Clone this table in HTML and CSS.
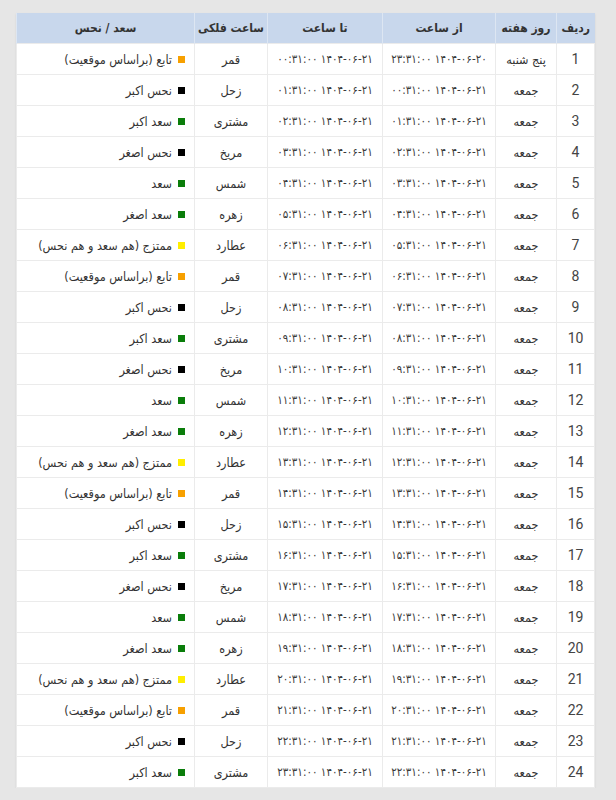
FILE: index.html
```html
<!DOCTYPE html>
<html lang="fa" dir="rtl">
<head>
<meta charset="utf-8">
<link rel="stylesheet" href="styles.css">
</head>
<body>
<table class="hours">
<colgroup><col class="c-n"><col class="c-day"><col class="c-from"><col class="c-to"><col class="c-planet"><col class="c-kind"></colgroup>
<thead><tr><th>ردیف</th><th>روز هفته</th><th>از ساعت</th><th>تا ساعت</th><th>ساعت فلکی</th><th>سعد / نحس</th></tr></thead>
<tbody>
<tr><td class="num">1</td><td>پنج شنبه</td><td class="t">۱۴۰۴-۰۶-۲۰ ۲۳:۳۱:۰۰</td><td class="t">۱۴۰۴-۰۶-۲۱ ۰۰:۳۱:۰۰</td><td>قمر</td><td class="kind"><span class="sq orange"></span>تابع (براساس موقعیت)</td></tr>
<tr><td class="num">2</td><td>جمعه</td><td class="t">۱۴۰۴-۰۶-۲۱ ۰۰:۳۱:۰۰</td><td class="t">۱۴۰۴-۰۶-۲۱ ۰۱:۳۱:۰۰</td><td>زحل</td><td class="kind"><span class="sq black"></span>نحس اکبر</td></tr>
<tr><td class="num">3</td><td>جمعه</td><td class="t">۱۴۰۴-۰۶-۲۱ ۰۱:۳۱:۰۰</td><td class="t">۱۴۰۴-۰۶-۲۱ ۰۲:۳۱:۰۰</td><td>مشتری</td><td class="kind"><span class="sq green"></span>سعد اکبر</td></tr>
<tr><td class="num">4</td><td>جمعه</td><td class="t">۱۴۰۴-۰۶-۲۱ ۰۲:۳۱:۰۰</td><td class="t">۱۴۰۴-۰۶-۲۱ ۰۳:۳۱:۰۰</td><td>مریخ</td><td class="kind"><span class="sq black"></span>نحس اصغر</td></tr>
<tr><td class="num">5</td><td>جمعه</td><td class="t">۱۴۰۴-۰۶-۲۱ ۰۳:۳۱:۰۰</td><td class="t">۱۴۰۴-۰۶-۲۱ ۰۴:۳۱:۰۰</td><td>شمس</td><td class="kind"><span class="sq green"></span>سعد</td></tr>
<tr><td class="num">6</td><td>جمعه</td><td class="t">۱۴۰۴-۰۶-۲۱ ۰۴:۳۱:۰۰</td><td class="t">۱۴۰۴-۰۶-۲۱ ۰۵:۳۱:۰۰</td><td>زهره</td><td class="kind"><span class="sq green"></span>سعد اصغر</td></tr>
<tr><td class="num">7</td><td>جمعه</td><td class="t">۱۴۰۴-۰۶-۲۱ ۰۵:۳۱:۰۰</td><td class="t">۱۴۰۴-۰۶-۲۱ ۰۶:۳۱:۰۰</td><td>عطارد</td><td class="kind"><span class="sq yellow"></span>ممتزج (هم سعد و هم نحس)</td></tr>
<tr><td class="num">8</td><td>جمعه</td><td class="t">۱۴۰۴-۰۶-۲۱ ۰۶:۳۱:۰۰</td><td class="t">۱۴۰۴-۰۶-۲۱ ۰۷:۳۱:۰۰</td><td>قمر</td><td class="kind"><span class="sq orange"></span>تابع (براساس موقعیت)</td></tr>
<tr><td class="num">9</td><td>جمعه</td><td class="t">۱۴۰۴-۰۶-۲۱ ۰۷:۳۱:۰۰</td><td class="t">۱۴۰۴-۰۶-۲۱ ۰۸:۳۱:۰۰</td><td>زحل</td><td class="kind"><span class="sq black"></span>نحس اکبر</td></tr>
<tr><td class="num">10</td><td>جمعه</td><td class="t">۱۴۰۴-۰۶-۲۱ ۰۸:۳۱:۰۰</td><td class="t">۱۴۰۴-۰۶-۲۱ ۰۹:۳۱:۰۰</td><td>مشتری</td><td class="kind"><span class="sq green"></span>سعد اکبر</td></tr>
<tr><td class="num">11</td><td>جمعه</td><td class="t">۱۴۰۴-۰۶-۲۱ ۰۹:۳۱:۰۰</td><td class="t">۱۴۰۴-۰۶-۲۱ ۱۰:۳۱:۰۰</td><td>مریخ</td><td class="kind"><span class="sq black"></span>نحس اصغر</td></tr>
<tr><td class="num">12</td><td>جمعه</td><td class="t">۱۴۰۴-۰۶-۲۱ ۱۰:۳۱:۰۰</td><td class="t">۱۴۰۴-۰۶-۲۱ ۱۱:۳۱:۰۰</td><td>شمس</td><td class="kind"><span class="sq green"></span>سعد</td></tr>
<tr><td class="num">13</td><td>جمعه</td><td class="t">۱۴۰۴-۰۶-۲۱ ۱۱:۳۱:۰۰</td><td class="t">۱۴۰۴-۰۶-۲۱ ۱۲:۳۱:۰۰</td><td>زهره</td><td class="kind"><span class="sq green"></span>سعد اصغر</td></tr>
<tr><td class="num">14</td><td>جمعه</td><td class="t">۱۴۰۴-۰۶-۲۱ ۱۲:۳۱:۰۰</td><td class="t">۱۴۰۴-۰۶-۲۱ ۱۳:۳۱:۰۰</td><td>عطارد</td><td class="kind"><span class="sq yellow"></span>ممتزج (هم سعد و هم نحس)</td></tr>
<tr><td class="num">15</td><td>جمعه</td><td class="t">۱۴۰۴-۰۶-۲۱ ۱۳:۳۱:۰۰</td><td class="t">۱۴۰۴-۰۶-۲۱ ۱۴:۳۱:۰۰</td><td>قمر</td><td class="kind"><span class="sq orange"></span>تابع (براساس موقعیت)</td></tr>
<tr><td class="num">16</td><td>جمعه</td><td class="t">۱۴۰۴-۰۶-۲۱ ۱۴:۳۱:۰۰</td><td class="t">۱۴۰۴-۰۶-۲۱ ۱۵:۳۱:۰۰</td><td>زحل</td><td class="kind"><span class="sq black"></span>نحس اکبر</td></tr>
<tr><td class="num">17</td><td>جمعه</td><td class="t">۱۴۰۴-۰۶-۲۱ ۱۵:۳۱:۰۰</td><td class="t">۱۴۰۴-۰۶-۲۱ ۱۶:۳۱:۰۰</td><td>مشتری</td><td class="kind"><span class="sq green"></span>سعد اکبر</td></tr>
<tr><td class="num">18</td><td>جمعه</td><td class="t">۱۴۰۴-۰۶-۲۱ ۱۶:۳۱:۰۰</td><td class="t">۱۴۰۴-۰۶-۲۱ ۱۷:۳۱:۰۰</td><td>مریخ</td><td class="kind"><span class="sq black"></span>نحس اصغر</td></tr>
<tr><td class="num">19</td><td>جمعه</td><td class="t">۱۴۰۴-۰۶-۲۱ ۱۷:۳۱:۰۰</td><td class="t">۱۴۰۴-۰۶-۲۱ ۱۸:۳۱:۰۰</td><td>شمس</td><td class="kind"><span class="sq green"></span>سعد</td></tr>
<tr><td class="num">20</td><td>جمعه</td><td class="t">۱۴۰۴-۰۶-۲۱ ۱۸:۳۱:۰۰</td><td class="t">۱۴۰۴-۰۶-۲۱ ۱۹:۳۱:۰۰</td><td>زهره</td><td class="kind"><span class="sq green"></span>سعد اصغر</td></tr>
<tr><td class="num">21</td><td>جمعه</td><td class="t">۱۴۰۴-۰۶-۲۱ ۱۹:۳۱:۰۰</td><td class="t">۱۴۰۴-۰۶-۲۱ ۲۰:۳۱:۰۰</td><td>عطارد</td><td class="kind"><span class="sq yellow"></span>ممتزج (هم سعد و هم نحس)</td></tr>
<tr><td class="num">22</td><td>جمعه</td><td class="t">۱۴۰۴-۰۶-۲۱ ۲۰:۳۱:۰۰</td><td class="t">۱۴۰۴-۰۶-۲۱ ۲۱:۳۱:۰۰</td><td>قمر</td><td class="kind"><span class="sq orange"></span>تابع (براساس موقعیت)</td></tr>
<tr><td class="num">23</td><td>جمعه</td><td class="t">۱۴۰۴-۰۶-۲۱ ۲۱:۳۱:۰۰</td><td class="t">۱۴۰۴-۰۶-۲۱ ۲۲:۳۱:۰۰</td><td>زحل</td><td class="kind"><span class="sq black"></span>نحس اکبر</td></tr>
<tr><td class="num">24</td><td>جمعه</td><td class="t">۱۴۰۴-۰۶-۲۱ ۲۲:۳۱:۰۰</td><td class="t">۱۴۰۴-۰۶-۲۱ ۲۳:۳۱:۰۰</td><td>مشتری</td><td class="kind"><span class="sq green"></span>سعد اکبر</td></tr>
</tbody>
</table>
</body>
</html>
```
FILE: styles.css
```css
html, body {
  margin: 0;
  padding: 0;
  background: #e6e6e6;
}
body {
  padding: 13px 21px 0 17px;
  font-family: "DejaVu Sans Condensed", "DejaVu Sans", sans-serif;
  font-stretch: condensed;
  color: #333;
}
.hours {
  width: 578px;
  border-collapse: collapse;
  table-layout: fixed;
  background: #fff;
  box-shadow: 0 1px 2px rgba(0,0,0,0.08);
}
.c-n { width: 38px; }
.c-day { width: 61px; }
.c-from { width: 113px; }
.c-to { width: 115px; }
.c-planet { width: 73px; }
.c-kind { width: 178px; }
.hours th {
  background: #c8d7ec;
  height: 30px;
  padding: 0;
  font-size: 12px;
  font-weight: 600;
  color: #333;
  text-align: center;
  white-space: nowrap;
  border-left: 1px solid #dde6f2;
}
.hours td {
  height: 30px;
  padding: 0;
  font-size: 12.5px;
  text-align: center;
  border: 1px solid #ebebeb;
  white-space: nowrap;
}
.hours td.t {
  font-size: 11.5px;
  color: #3a3a3a;
}
.hours td.num {
  font-family: "Roboto", "Liberation Sans", sans-serif;
  font-stretch: normal;
  font-size: 14px;
  color: #444;
}
.hours td.kind {
  text-align: right;
  padding-right: 9px;
}
.sq {
  display: inline-block;
  width: 7px;
  height: 7px;
  margin-left: 6px;
  vertical-align: 1px;
}
.orange { background: #f7a000; }
.black { background: #000; }
.green { background: #0a7d0a; }
.yellow { background: #ffee00; }
```
